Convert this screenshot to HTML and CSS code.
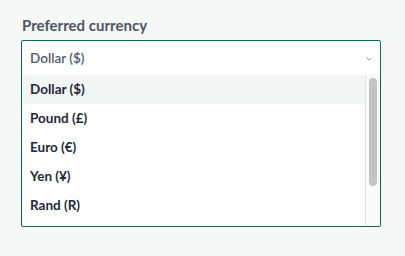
FILE: index.html
```html
<!DOCTYPE html>
<html lang="en">
<head>
<meta charset="utf-8">
<title>Preferred currency</title>
<link rel="stylesheet" href="styles.css">
</head>
<body>
<div class="field">
  <div class="label">Preferred currency</div>
  <div class="combo">
    <div class="control">
      <span class="value">Dollar ($)</span>
      <svg class="chev" width="6" height="4" viewBox="0 0 6 4"><path d="M0.5 0.8 L3 3.2 L5.5 0.8" fill="none" stroke="#8d969f" stroke-width="1"/></svg>
    </div>
    <div class="listwrap">
      <ul class="list">
        <li class="opt active">Dollar ($)</li>
        <li class="opt">Pound (£)</li>
        <li class="opt">Euro (€)</li>
        <li class="opt">Yen (¥)</li>
        <li class="opt">Rand (R)</li>
      </ul>
      <div class="scrollbar"><div class="thumb"></div></div>
    </div>
  </div>
</div>
</body>
</html>
```
FILE: styles.css
```css
html, body {
  margin: 0;
  padding: 0;
  background: #f6f8f7;
  font-family: Lato, "Noto Sans", sans-serif;
}
.field {
  padding: 15px 0 0 21px;
  width: 360px;
}
.label {
  font-size: 15px;
  line-height: 20px;
  font-weight: 700;
  color: #4e5566;
  margin-bottom: 5px;
  padding-left: 1px;
}
.combo {
  border: 1px solid #0c6a4a;
  border-radius: 2px;
  background: #fff;
  box-shadow: 0 2px 1px rgba(0, 0, 0, 0.12);
  overflow: hidden;
}
.control {
  height: 34px;
  display: flex;
  align-items: center;
  justify-content: space-between;
  padding: 0 8px 0 8px;
  font-size: 13.5px;
  color: #545b6a;
  font-weight: 600;
}
.chev { display: block; margin-top: 1px; }
.listwrap {
  display: flex;
  height: 151px;
  overflow: hidden;
}
.list {
  list-style: none;
  margin: 0;
  padding: 0;
  flex: 1;
}
.opt {
  height: 29px;
  line-height: 29px;
  padding-left: 8px;
  font-size: 13.5px;
  font-weight: 700;
  color: #1f2838;
}
.opt.active { background: #f1f5f4; }
.scrollbar {
  width: 14px;
  border-left: 1px solid #e4e4e4;
  background: #fafafa;
  display: flex;
  justify-content: center;
  padding-top: 3px;
}
.thumb {
  width: 8px;
  height: 108px;
  border-radius: 4px;
  background: #c3c3c3;
}
```
